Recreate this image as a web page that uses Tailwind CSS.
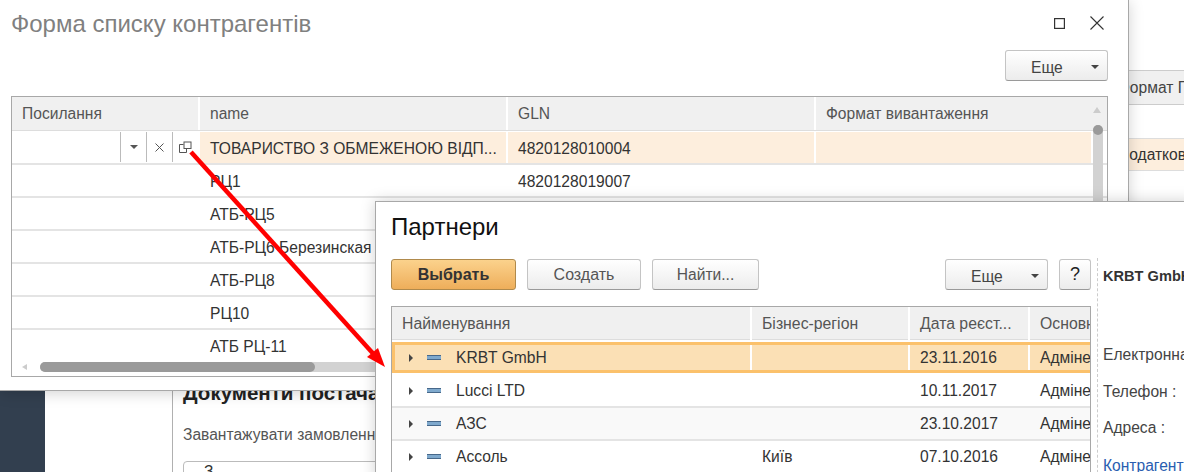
<!DOCTYPE html>
<html><head><meta charset="utf-8"><script src="https://cdn.jsdelivr.net/npm/@tailwindcss/browser@4"></script></head>
<body class="bg-white">
<div class="relative w-[1184px] h-[472px] overflow-hidden bg-white font-['Liberation_Sans',Arial,sans-serif] text-[15.6px] text-[#333]">

<!-- page behind -->
<div class="absolute left-0 top-[390px] w-[45px] h-[82px] bg-[#323f4f]"></div>
<div class="absolute left-[172px] top-[390px] w-[203px] h-[82px] border-l border-[#b0b0b0] pl-[10px] overflow-hidden">
  <div class="text-[20.5px] font-bold text-[#222] leading-[22px] mt-[-8px] whitespace-nowrap">Документи постача</div>
  <div class="mt-[21px] text-[#555] leading-[20px] whitespace-nowrap">Завантажувати замовленн</div>
  <div class="mt-[16px] h-[30px] rounded border border-[#bbb] w-[200px] pl-[20px] leading-[20px]">З</div>
</div>
<div class="absolute left-[1129px] top-[70px] w-[55px] h-[110px] text-[#444] overflow-hidden">
  <div class="h-[35px] bg-[#f0f0f0] border-y border-[#ccc] leading-[33px] whitespace-nowrap"><span class="ml-[-11px] inline-block">Формат П</span></div>
  <div class="h-[34px] border-b border-[#ddd]"></div>
  <div class="h-[32px] bg-[#fdeedd] border-b border-[#ddd] leading-[31px] whitespace-nowrap"><span class="ml-[-11px] inline-block text-[#333]">Податков</span></div>
</div>

<!-- list window -->
<section class="absolute left-0 top-0 w-[1129px] h-[391px] bg-white border-r border-b border-[#a8a8a8] shadow-[0_2px_14px_rgba(0,0,0,0.18)] flex flex-col">
  <header class="flex items-start h-[50px] pl-[11px] pr-[24px]">
    <h1 class="text-[24px] leading-[24px] mt-[12px] text-[#808080] flex-1">Форма списку контрагентів</h1>
    <svg class="mt-[18px]" width="11" height="11" viewBox="0 0 11 11" fill="none" stroke="#333" stroke-width="1.2"><rect x=".6" y=".6" width="9.800" height="9.800"/></svg>
    <svg class="ml-[25px] mt-[16px]" width="14" height="14" viewBox="0 0 14 14" fill="none" stroke="#333" stroke-width="1.1"><path d="M.5.500L13.500 13.500M13.500.500L.5 13.500"/></svg>
  </header>
  <div class="flex justify-end pr-[20px] h-[46px]">
    <button class="relative w-[103px] h-[31px] rounded-[3px] border border-[#c4c4c4] border-b-[#9a9a9a] bg-gradient-to-b from-white to-[#ececec] text-[#444]"><span class="absolute left-[25px] top-[5px]">Еще</span><span class="absolute right-[8px] top-[14px] border-x-[4px] border-x-transparent border-t-[4px] border-t-[#444]"></span></button>
  </div>
  <div class="ml-[11px] w-[1097px] h-[281px] border border-[#a8a8a8] relative flex flex-col overflow-hidden">
    <div class="grid grid-cols-[188px_308px_308px_275px] h-[34px] bg-[#f0f0f0] text-[#555] leading-[33px] border-b-[1px] border-[#ddd]">
      <div class="pl-[10px] border-r-2 border-white">Посилання</div>
      <div class="pl-[10px] border-r-2 border-white">name</div>
      <div class="pl-[10px] border-r-2 border-white">GLN</div>
      <div class="pl-[10px]">Формат вивантаження</div>
    </div>
    <div class="grid grid-cols-[188px_308px_308px_275px] h-[33px] leading-[33px] border-b-2 border-[#e4e4e4] mt-[1px]">
      <div class="flex justify-end">
        <div class="w-[26px] h-[30px] border-l border-[#bbb] flex items-center justify-center"><span class="border-x-[4px] border-x-transparent border-t-[4px] border-t-[#555]"></span></div>
        <div class="w-[26px] h-[30px] border-l border-[#bbb] flex items-center justify-center"><svg width="9" height="9" viewBox="0 0 9 9" fill="none" stroke="#555"><path d="M.5.5l8 8M8.500.5l-8 8"/></svg></div>
        <div class="w-[28px] h-[30px] border-l border-[#bbb] flex items-center pl-[6px]"><svg width="13" height="13" viewBox="0 0 13 13" fill="none" stroke="#555"><path d="M4.500 3.500H.5v8h7V8"/><rect x="5" y="1" width="7" height="6.500"/></svg></div>
      </div>
      <div class="pl-[10px] bg-[#fdeedd] border-r-2 border-white h-[31px] whitespace-nowrap">ТОВАРИСТВО З ОБМЕЖЕНОЮ ВІДП...</div>
      <div class="pl-[10px] bg-[#fdeedd] border-r-2 border-white h-[31px]">4820128010004</div>
      <div class="bg-[#fdeedd] h-[31px]"></div>
    </div>
    <div class="grid grid-cols-[188px_308px_308px_275px] h-[33px] leading-[34px] border-b-2 border-[#e4e4e4]"><div></div><div class="pl-[10px]">РЦ1</div><div class="pl-[10px]">4820128019007</div></div>
    <div class="grid grid-cols-[188px_308px_308px_275px] h-[33px] leading-[34px] border-b-2 border-[#e4e4e4]"><div></div><div class="pl-[10px]">АТБ-РЦ5</div></div>
    <div class="grid grid-cols-[188px_308px_308px_275px] h-[33px] leading-[34px] border-b-2 border-[#e4e4e4]"><div></div><div class="pl-[10px]">АТБ-РЦ6 Березинская</div></div>
    <div class="grid grid-cols-[188px_308px_308px_275px] h-[33px] leading-[34px] border-b-2 border-[#e4e4e4]"><div></div><div class="pl-[10px]">АТБ-РЦ8</div></div>
    <div class="grid grid-cols-[188px_308px_308px_275px] h-[33px] leading-[34px] border-b-2 border-[#e4e4e4]"><div></div><div class="pl-[10px]">РЦ10</div></div>
    <div class="grid grid-cols-[188px_308px_308px_275px] h-[33px] leading-[34px]"><div></div><div class="pl-[10px]">АТБ РЦ-11</div></div>
    <!-- horizontal scrollbar -->
    <div class="absolute left-[28px] top-[265px] w-[1060px] h-[10px] rounded-full bg-[#d2d2d2]"><div class="w-[275px] h-[10px] rounded-full bg-[#9a9a9a]"></div></div>
    <span class="absolute left-[10px] top-[267px] border-y-[3px] border-y-transparent border-r-[5px] border-r-[#ccc]"></span>
    <!-- vertical scrollbar -->
    <span class="absolute left-[1081px] top-[10px] border-x-[4px] border-x-transparent border-b-[6px] border-b-[#ccc]"></span>
    <div class="absolute left-[1081px] top-[28px] w-[10px] h-[230px] rounded-full bg-[#d2d2d2]"><div class="w-[10px] h-[10px] rounded-full bg-[#9a9a9a]"></div></div>
  </div>
</section>

<!-- partners window -->
<section class="absolute left-[375px] top-[201px] w-[820px] h-[280px] bg-white border-l border-t border-[#a8a8a8] shadow-[0_0_14px_rgba(0,0,0,0.18)] flex">
  <div class="w-[721px] pl-[15px] shrink-0">
    <h2 class="text-[24px] leading-[28px] mt-[11px] text-[#111]">Партнери</h2>
    <div class="flex items-start mt-[18px] h-[47px] pr-[6px]">
      <button class="w-[125px] h-[31px] rounded-[3px] border border-[#b08a4c] bg-gradient-to-b from-[#fbd28c] to-[#eeae5a] font-bold text-[16px] text-[#333]">Выбрать</button>
      <button class="ml-[11px] w-[114px] h-[31px] rounded-[3px] border border-[#c4c4c4] border-b-[#9a9a9a] bg-gradient-to-b from-white to-[#ececec] text-[16px] text-[#555]">Создать</button>
      <button class="ml-[11px] w-[107px] h-[31px] rounded-[3px] border border-[#c4c4c4] border-b-[#9a9a9a] bg-gradient-to-b from-white to-[#ececec] text-[#555]">Найти...</button>
      <button class="relative ml-auto w-[103px] h-[31px] rounded-[3px] border border-[#c4c4c4] border-b-[#9a9a9a] bg-gradient-to-b from-white to-[#ececec] text-[#444]"><span class="absolute left-[25px] top-[5px]">Еще</span><span class="absolute right-[8px] top-[14px] border-x-[4px] border-x-transparent border-t-[4px] border-t-[#444]"></span></button>
      <button class="ml-[11px] w-[32px] h-[31px] rounded-[3px] border border-[#c4c4c4] border-b-[#9a9a9a] bg-gradient-to-b from-white to-[#ececec] text-[#222] text-[18px]">?</button>
    </div>
    <div class="w-[700px] h-[170px] border border-[#a8a8a8] overflow-hidden">
      <div class="grid grid-cols-[360px_158px_120px_80px] h-[33px] bg-[#f0f0f0] text-[#555] text-[15.8px] leading-[33px] border-b border-[#ddd] whitespace-nowrap">
        <div class="pl-[10px] border-r-2 border-white">Найменування</div>
        <div class="pl-[10px] border-r-2 border-white">Бізнес-регіон</div>
        <div class="pl-[10px] border-r-2 border-white">Дата реєст...</div>
        <div class="pl-[10px]">Основн</div>
      </div>
      <div class="grid grid-cols-[357px_158px_120px_80px] h-[31px] leading-[25px] mt-[2px] bg-[#fbe0b5] border-y-[3px] border-l-[3px] border-[#fbc16b] whitespace-nowrap">
        <div class="flex items-center border-r-2 border-white pl-[14px]"><span class="border-y-[4px] border-y-transparent border-l-[4px] border-l-[#444]"></span><span class="ml-[14px] w-[14px] h-[5px] bg-[#7fa9cd] border-y border-[#47688a]"></span><span class="ml-[15px]">KRBT GmbH</span></div>
        <div class="border-r-2 border-white"></div>
        <div class="pl-[10px] border-r-2 border-white">23.11.2016</div>
        <div class="pl-[10px]">Адміне</div>
      </div>
      <div class="grid grid-cols-[360px_158px_120px_80px] h-[33px] leading-[31px] mt-[2px] border-b-2 border-[#e4e4e4] whitespace-nowrap">
        <div class="flex items-center pl-[17px]"><span class="border-y-[4px] border-y-transparent border-l-[4px] border-l-[#444]"></span><span class="ml-[14px] w-[14px] h-[5px] bg-[#7fa9cd] border-y border-[#47688a]"></span><span class="ml-[15px]">Lucci LTD</span></div>
        <div></div><div class="pl-[10px]">10.11.2017</div><div class="pl-[10px]">Адміне</div>
      </div>
      <div class="grid grid-cols-[360px_158px_120px_80px] h-[33px] leading-[31px] bg-[#f9f9f9] border-b-2 border-[#e4e4e4] whitespace-nowrap">
        <div class="flex items-center pl-[17px]"><span class="border-y-[4px] border-y-transparent border-l-[4px] border-l-[#444]"></span><span class="ml-[14px] w-[14px] h-[5px] bg-[#7fa9cd] border-y border-[#47688a]"></span><span class="ml-[15px]">АЗС</span></div>
        <div></div><div class="pl-[10px]">23.10.2017</div><div class="pl-[10px]">Адміне</div>
      </div>
      <div class="grid grid-cols-[360px_158px_120px_80px] h-[33px] pb-[2px] leading-[31px] whitespace-nowrap">
        <div class="flex items-center pl-[17px]"><span class="border-y-[4px] border-y-transparent border-l-[4px] border-l-[#444]"></span><span class="ml-[14px] w-[14px] h-[5px] bg-[#7fa9cd] border-y border-[#47688a]"></span><span class="ml-[15px]">Ассоль</span></div>
        <div class="pl-[10px]">Київ</div><div class="pl-[10px]">07.10.2016</div><div class="pl-[10px]">Адміне</div>
      </div>
    </div>
  </div>
  <aside class="mt-[56px] h-[230px] border-l border-dashed border-[#ccc] pl-[5px] whitespace-nowrap text-[#444]">
    <div class="text-[14.6px] font-bold text-[#333] leading-[16px] mt-[10px]">KRBT GmbH</div>
    <div class="mt-[62px] leading-[18px]">Електронна</div>
    <div class="mt-[19px] leading-[18px]">Телефон :</div>
    <div class="mt-[18px] leading-[18px]">Адреса :</div>
    <div class="mt-[20px] leading-[18px] text-[#2a5db0]">Контрагент</div>
  </aside>
</section>

<!-- red arrow -->
<svg class="absolute left-0 top-0 pointer-events-none" width="1184" height="472" viewBox="0 0 1184 472" fill="none"><path d="M191 152L378 359" stroke="#f00" stroke-width="4.500"/><path d="M385 367L367 357L378 348Z" fill="#f00"/></svg>
</div>
</body></html>
